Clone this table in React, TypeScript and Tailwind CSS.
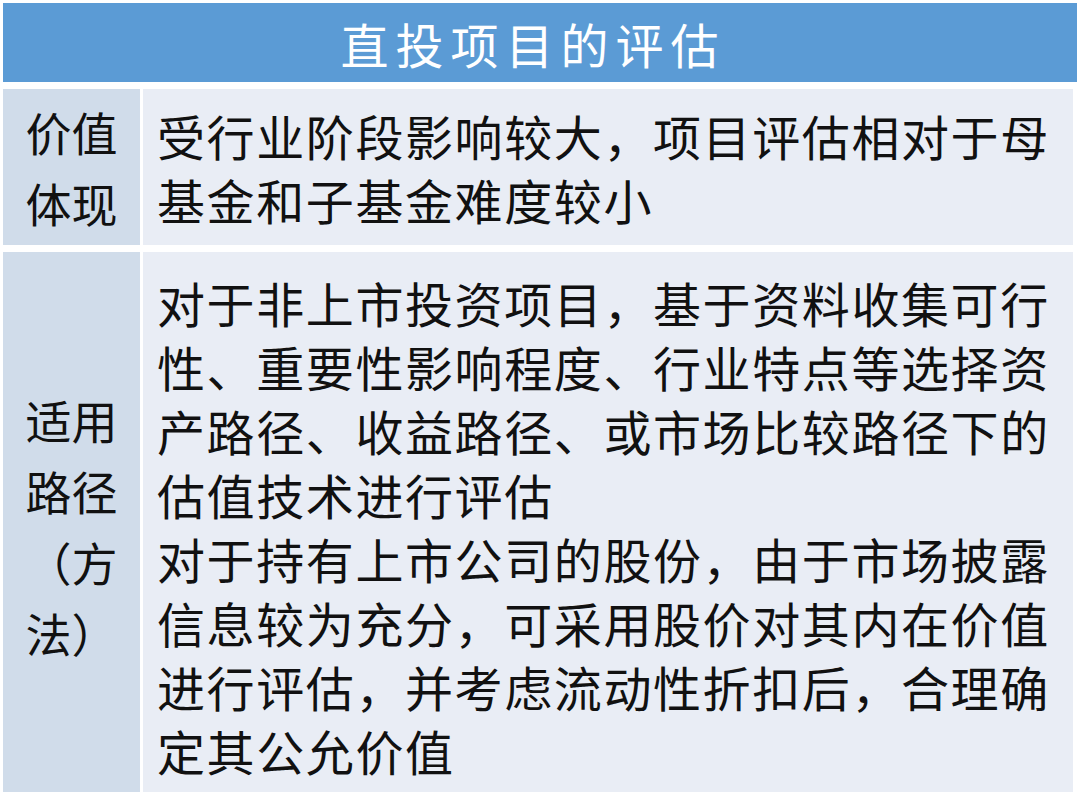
import React from 'react'

const cjk = '"Noto Sans CJK SC", "Noto Sans", sans-serif'

const Label: React.FC<{ lines: string[] }> = ({ lines }) => (
  <div className="w-[137px] shrink-0 bg-[#d0dcea] flex flex-col items-center justify-center text-center text-[46px] leading-[71px] text-[#111]">
    {lines.map((l) => (
      <div key={l} className="whitespace-nowrap">{l}</div>
    ))}
  </div>
)

const App: React.FC = () => {
  return (
    <div className="h-[792px] overflow-hidden bg-white px-[3px] pt-[3px]" style={{ fontFamily: cjk }}>
      {/* Title */}
      <div className="h-[79px] bg-[#5b9bd5] flex items-center justify-center pr-[14px] text-white text-[48px] tracking-[7px]">
        直投项目的评估
      </div>

      {/* 价值体现 */}
      <div className="mt-[7px] mr-[4px] flex gap-[3px] h-[156px]">
        <Label lines={['价值', '体现']} />
        <div className="flex-1 bg-[#e9edf5] pl-[14px] flex items-center">
          <p className="w-[894px] text-[48px] leading-[64px] tracking-[1.6px] text-[#111]">
            受行业阶段影响较大，项目评估相对于母基金和子基金难度较小
          </p>
        </div>
      </div>

      {/* 适用路径 */}
      <div className="mt-[7px] mr-[4px] flex gap-[3px] h-[548px]">
        <Label lines={['适用', '路径', '（方', '法）']} />
        <div className="flex-1 bg-[#e9edf5] pl-[14px] pt-[18px]">
          <div className="w-[894px] text-[48px] leading-[64px] tracking-[1.6px] text-[#111]">
            <p>对于非上市投资项目，基于资料收集可行性、重要性影响程度、行业特点等选择资产路径、收益路径、或市场比较路径下的估值技术进行评估</p>
            <p>对于持有上市公司的股份，由于市场披露信息较为充分，可采用股价对其内在价值进行评估，并考虑流动性折扣后，合理确定其公允价值</p>
          </div>
        </div>
      </div>
    </div>
  )
}

export default App
